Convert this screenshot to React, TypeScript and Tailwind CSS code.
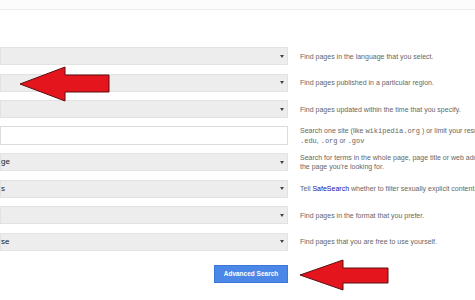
const mono = "font-['Liberation_Mono',monospace]";

const rows: { label: string; help: React.ReactNode; input?: boolean }[] = [
  { label: '', help: 'Find pages in the language that you select.' },
  { label: '', help: 'Find pages published in a particular region.' },
  { label: '', help: 'Find pages updated within the time that you specify.' },
  {
    label: '',
    input: true,
    help: (
      <>
        Search one site (like <span className={mono}>wikipedia.org</span> ) or limit your results to a domain like
        <br />
        <span className={mono}>.edu</span>, <span className={mono}>.org</span> or <span className={mono}>.gov</span>
      </>
    ),
  },
  {
    label: 'ge',
    help: (
      <>
        Search for terms in the whole page, page title or web address, or links to
        <br />
        the page you're looking for.
      </>
    ),
  },
  {
    label: 's',
    help: (
      <>
        Tell <span className="text-[#1a0dab]">SafeSearch</span> whether to filter sexually explicit content.
      </>
    ),
  },
  { label: '', help: 'Find pages in the format that you prefer.' },
  { label: 'se', help: 'Find pages that you are free to use yourself.' },
];

const Arrow = ({ points }: { points: string }) => (
  <polygon points={points} fill="#e5151d" stroke="#5a1010" strokeWidth="1" strokeLinejoin="round" />
);

export default function App() {
  return (
    <div className="relative w-[475px] h-[300px] overflow-hidden bg-white font-['Liberation_Sans',Arial,sans-serif]">
      <div className="h-[10px] border-b border-[#ececec] bg-[#fcfcfc]" />
      <div className="flex flex-col pt-[33px]">
        {rows.map((r, i) => (
          <div key={i} className="flex items-center h-[26.5px]">
            {r.input ? (
              <div className="w-[288px] h-[19px] shrink-0 border border-[#dcdcdc] bg-white" />
            ) : (
              <div className="w-[288px] h-[18px] shrink-0 flex items-center justify-between border border-[#e2e2e2] bg-[#ededed] pr-[3px]">
                <span className="text-[8px] leading-none text-[#222]">{r.label}</span>
                <span className="w-0 h-0 border-l-[2px] border-r-[2px] border-t-[3px] border-l-transparent border-r-transparent border-t-[#444]" />
              </div>
            )}
            <div className="ml-[12px] min-w-0 overflow-hidden text-[7px] leading-[9px] text-[#666] whitespace-nowrap">{r.help}</div>
          </div>
        ))}
        <div className="flex mt-[10px]">
          <button className="ml-[214px] w-[74px] h-[18px] bg-[#4a87e6] border border-[#3b78d8] text-white text-[6.5px] font-bold">
            Advanced Search
          </button>
        </div>
      </div>
      <svg className="absolute inset-0 pointer-events-none" width="475" height="300">
        <Arrow points="20,84 65,67 65,75 109,75 109,92 65,92 65,101" />
        <Arrow points="300,275 343,260 343,268 388,268 388,283 343,283 343,290" />
      </svg>
    </div>
  );
}
